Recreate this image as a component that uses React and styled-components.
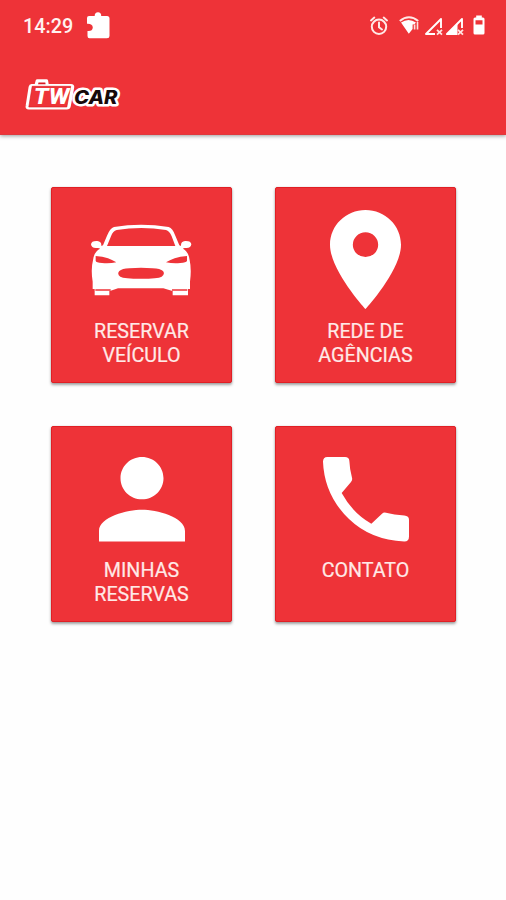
import React from "react";
import styled, { createGlobalStyle } from "styled-components";

const RED = "#ee3338";

const Global = createGlobalStyle`
  * { box-sizing: border-box; }
  body { margin: 0; background: #fff; font-family: Roboto, sans-serif; }
`;

const Screen = styled.div`
  width: 506px;
  height: 900px;
  overflow: hidden;
  background: #fefefe;
`;

const Header = styled.header`
  height: 135px;
  background: ${RED};
  border-bottom: 1px solid #e0383c;
  box-shadow: 0 1px 4px rgba(0, 0, 0, 0.4);
`;

const StatusBar = styled.div`
  height: 52px;
  padding: 0 21px 0 23px;
  display: flex;
  justify-content: space-between;
`;

const StatusGroup = styled.div`
  display: flex;
  align-items: center;
`;

const Clock = styled.span`
  width: 63px;
  font-size: 19.8px;
  font-weight: 500;
  line-height: 52px;
  padding-top: 2px;
  color: #fff2f0;
`;

const Glyph = styled.svg`
  display: block;
  flex: none;
  fill: #fff;
  overflow: visible;
  width: ${(p) => p.$w}px;
  height: ${(p) => p.$h}px;
  margin-left: ${(p) => p.$left || 0}px;
  margin-top: ${(p) => p.$top || 0}px;
`;

const Toolbar = styled.div`
  padding: 25px 0 0 24px;
`;

const Grid = styled.main`
  display: grid;
  grid-template-columns: 181px 181px;
  grid-template-rows: 196px 196px;
  gap: 43px;
  padding: 51.5px 0 0 51px;
`;

const Tile = styled.button`
  display: flex;
  flex-direction: column;
  align-items: center;
  padding: 0;
  border: 1px solid #e01f25;
  border-radius: 2px;
  background: ${RED};
  box-shadow: 0 2px 3px rgba(0, 0, 0, 0.36), 0 0 2px rgba(0, 0, 0, 0.12);
  font-family: inherit;
`;

const IconArea = styled.span`
  height: 132.5px;
  display: flex;
  align-items: flex-start;
  justify-content: center;
`;

const Label = styled.span`
  font-size: 19.7px;
  line-height: 23.5px;
  color: #ffe9e7;
  text-align: center;
  white-space: pre-line;
  -webkit-text-stroke: 0.2px #ffe9e7;
`;

function Logo() {
  return (
    <Glyph $w={98} $h={34} viewBox="0 0 98 34" role="img" aria-label="TW CAR">
      <g fontFamily="Inter, sans-serif" fontStyle="italic" fontWeight="800">
        <text x="50" y="26.5" fontSize="18.5" textLength="43.5" lengthAdjust="spacingAndGlyphs" fill="#17090a" stroke="#fff" strokeWidth="5" strokeLinejoin="round" paintOrder="stroke">CAR</text>
      </g>
      <path d="M7.5 8.5H12L13.3 3.8H22.5L23.3 8.5H47Q49 8.5 48.6 10.5L45.2 29Q44.8 31 42.8 31H4.7Q2.8 31 3.2 29L6.2 10Q6.5 8.5 7.5 8.5Z" fill="#fff" stroke="#fff" strokeWidth="3.2" strokeLinejoin="round" />
      <path d="M8.2 9.3H46.7L42.8 30H4.8Z" fill={RED} stroke="#d81920" strokeWidth=".6" />
      <path d="M14.5 5.6H21.3L21.6 7.2H14.1Z" fill="#d81920" />
      <text x="9.8" y="27.3" fontFamily="Roboto, sans-serif" fontStyle="italic" fontWeight="800" fontSize="22" textLength="35.5" lengthAdjust="spacingAndGlyphs" fill="#fff">TW</text>
    </Glyph>
  );
}

function CarIcon() {
  return (
    <Glyph $w={101} $h={73} $top={36.5} viewBox="21 28 303 219">
      <path
        fillRule="evenodd"
        d="M90 37Q171 23 254 37Q266 41 274 63L286 92L291 94Q290 80 303 79Q321 78 322 89Q321 101 305 100Q298 99 297 102Q314 111 317 137Q323 164 318 201V223H312V242H266V228H263L238 221H102L80 228H76V242H32V223H26V201Q20 164 27 137Q30 111 48 102Q46 99 38 100Q22 101 21 89Q22 78 40 79Q53 80 52 94L57 92L69 63Q78 41 90 37Z
        M98 46Q172 34 246 46Q256 48 263 65L274 94H69L81 65Q87 48 98 46Z
        M35 124Q56 125 72 131Q89 138 97 143Q77 147 54 145Q36 144 35 138Z
        M309 124Q288 125 272 131Q254 138 246 143Q267 147 289 145Q307 144 309 138Z
        M106 169Q114 162 136 161Q171 157 206 161Q229 162 237 169Q244 178 233 186Q222 192 171 192Q120 192 109 186Q98 178 106 169Z"
      />
      <path d="M34 224H80V228H34ZM264 224H310V228H264Z" fill={RED} />
    </Glyph>
  );
}

function PinIcon() {
  return (
    <Glyph $w={71} $h={99} $top={22.5} viewBox="5 2 14 20" preserveAspectRatio="none">
      <path d="M12 2C8.13 2 5 5.13 5 9c0 5.25 7 13 7 13s7-7.75 7-13c0-3.87-3.13-7-7-7zm0 9.5a2.5 2.5 0 0 1 0-5 2.5 2.5 0 0 1 0 5z" />
    </Glyph>
  );
}

function PersonIcon() {
  return (
    <Glyph $w={86} $h={84.5} $top={30.5} viewBox="4 4 16 16" preserveAspectRatio="none">
      <path d="M12 12c2.21 0 4-1.79 4-4s-1.79-4-4-4-4 1.79-4 4 1.79 4 4 4zm0 2c-2.67 0-8 1.34-8 4v2h16v-2c0-2.66-5.33-4-8-4z" />
    </Glyph>
  );
}

function PhoneIcon() {
  return (
    <Glyph $w={86} $h={84.5} $top={30.5} viewBox="173 128 258 253" preserveAspectRatio="none">
      <path d="M186 128H239Q251 128 252 139Q253 164 260 190Q262 197 257 203L229 236Q261 295 318 328L350 298Q355 293 362 295Q386 302 417 303Q431 304 431 316V366Q431 381 417 381Q316 377 251 314Q177 242 173 142Q173 128 186 128Z" />
    </Glyph>
  );
}

function Signal({ filled, left }) {
  return (
    <Glyph $w={19} $h={18} $left={left} viewBox="0 0 19 18">
      <path d="M11 17H2L17 2V11" fill="none" stroke="#fff" strokeWidth="1.9" strokeLinejoin="round" />
      {filled && <path d="M1 18L12.5 6V18Z" />}
      <path d="M13 12.8L18 17.6M18 12.8L13 17.6" stroke="#ffe4e2" strokeWidth="1.8" />
    </Glyph>
  );
}

const tiles = [
  { label: "RESERVAR\nVEÍCULO", Icon: CarIcon },
  { label: "REDE DE\nAGÊNCIAS", Icon: PinIcon },
  { label: "MINHAS\nRESERVAS", Icon: PersonIcon },
  { label: "CONTATO", Icon: PhoneIcon },
];

export default function App() {
  return (
    <Screen>
      <Global />
      <Header>
        <StatusBar>
          <StatusGroup>
            <Clock>14:29</Clock>
            <Glyph $w={24} $h={27} $top={-1} viewBox="0 0 24 27">
              <path d="M3 4H8.7C8.5 1.8 10 .3 12 .3S15.5 1.8 15.2 4H21Q23.5 4 23.5 6.5V24Q23.5 26.3 21 26.3H3.5Q1.5 26.3 1.5 24V19Q6.5 19.5 6.8 15.5Q6.5 11.5 1 11.8V6Q1 4 3 4Z" />
            </Glyph>
          </StatusGroup>
          <StatusGroup>
            <Glyph $w={18} $h={19} $top={-2} viewBox="0 0 18 19">
              <g fill="none" stroke="#ffe9e6" strokeWidth="2" strokeLinecap="round">
                <circle cx="9" cy="10.8" r="7.2" />
                <path d="M1 4.4L4.3 1.6M17 4.4L13.7 1.6M9 6.5V11.2L12 13.5" />
              </g>
            </Glyph>
            <Glyph $w={20} $h={18} $left={11} $top={-2} viewBox="0 0 20 18">
              <path d="M.8 5Q10-2.5 19.2 5" fill="none" stroke="#ffe9e6" strokeWidth="2" />
              <path d="M2 6.5Q9.5 1.5 17 6.5L15.5 8.3L13.6 8.5V13L9.8 17.8Z" />
              <path d="M15.6 8.5V13.5M18.5 6V13.5" stroke="#ffe0dd" strokeWidth="1.6" />
            </Glyph>
            <Signal left={5} />
            <Signal left={2} filled />
            <Glyph $w={12} $h={20} $left={9} $top={-2} viewBox="0 0 12 19">
              <path fillRule="evenodd" d="M3.2 0H8.8V2H10Q11.5 2 11.5 3.5V17.5Q11.5 19 10 19H2Q.5 19 .5 17.5V3.5Q.5 2 2 2H3.2ZM2.5 4.7V9H9.5V4.7Z" />
            </Glyph>
          </StatusGroup>
        </StatusBar>
        <Toolbar>
          <Logo />
        </Toolbar>
      </Header>
      <Grid>
        {tiles.map(({ label, Icon }) => (
          <Tile key={label}>
            <IconArea>
              <Icon />
            </IconArea>
            <Label>{label}</Label>
          </Tile>
        ))}
      </Grid>
    </Screen>
  );
}
